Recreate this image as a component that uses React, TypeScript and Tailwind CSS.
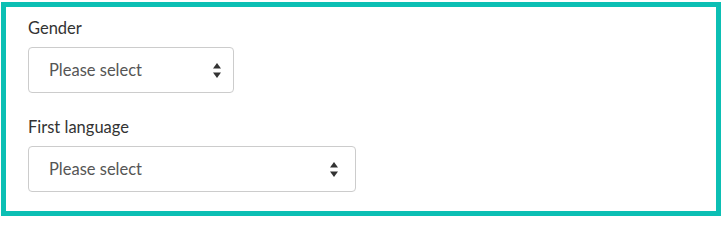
import React from 'react';

function SortArrows() {
  return (
    <svg width="8" height="15" viewBox="0 0 8 15" className="shrink-0">
      <path d="M4 0 L8 5.5 L0 5.5 Z" fill="#333" />
      <path d="M0 9.5 L8 9.5 L4 15 Z" fill="#333" />
    </svg>
  );
}

function SelectField({ label, width, padRight }: { label: string; width: string; padRight: string }) {
  return (
    <div className="flex flex-col">
      <label className="text-[16.5px] leading-6 text-[#333] mb-[7px]">{label}</label>
      <button
        type="button"
        className={`${width} ${padRight} h-[46px] flex items-center justify-between pl-[20px] border border-[#ccc] rounded-[4px] bg-white text-[16.5px] text-[#555]`}
      >
        <span>Please select</span>
        <SortArrows />
      </button>
    </div>
  );
}

export default function App() {
  return (
    <div className="bg-white w-[722px] h-[216px]" style={{ fontFamily: 'Lato, "Open Sans", sans-serif' }}>
      <div className="ml-[1px] mt-[2px] w-[720px] h-[214px] border-[5px] border-[#0cbfb4] pl-[22px] pt-[9px] flex flex-col gap-[22px]">
        <SelectField label="Gender" width="w-[206px]" padRight="pr-[12px]" />
        <SelectField label="First language" width="w-[328px]" padRight="pr-[17px]" />
      </div>
    </div>
  );
}
